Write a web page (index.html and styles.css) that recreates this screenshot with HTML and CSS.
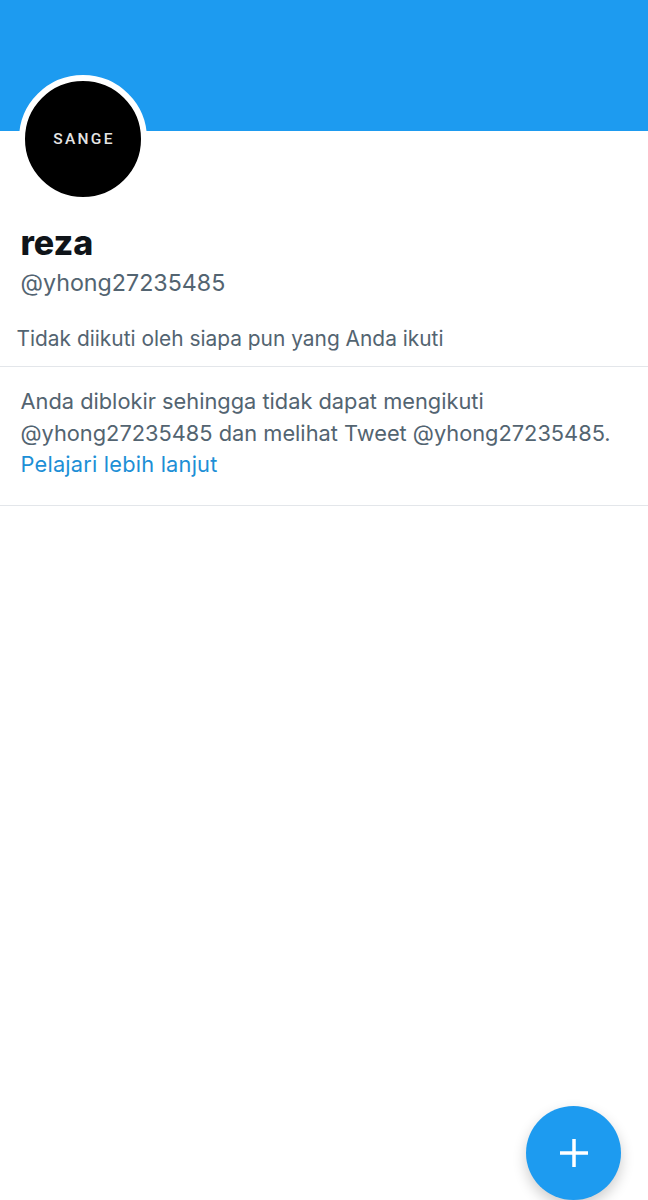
FILE: index.html
```html
<!DOCTYPE html>
<html lang="id">
<head>
    <meta charset="UTF-8">
    <meta name="viewport" content="width=device-width, initial-scale=1.0">
    <title>reza</title>
    <link rel="stylesheet" href="styles.css">
</head>
<body>
    <div class="page">
        <div class="banner"></div>
        <div class="profile">
            <div class="avatar"><span class="avatar-text">SANGE</span></div>
            <h1 class="name">reza</h1>
            <div class="handle">@yhong27235485</div>
            <div class="followers">Tidak diikuti oleh siapa pun yang Anda ikuti</div>
        </div>
        <div class="blocked">
            <p>Anda diblokir sehingga tidak dapat mengikuti<br>@yhong27235485 dan melihat Tweet @yhong27235485.<br><a href="#">Pelajari lebih lanjut</a></p>
        </div>
        <button class="fab" aria-label="Tweet">
            <svg width="28" height="28" viewBox="0 0 28 28"><path d="M14 0V28M0 14H28" stroke="#fff" stroke-width="3.500" fill="none"/></svg>
        </button>
    </div>
</body>
</html>
```

FILE: styles.css
```css
html, body {
    margin: 0;
    padding: 0;
}
body {
    font-family: Inter, "Noto Sans", Arial, sans-serif;
    background-color: #ffffff;
    color: #536471;
}
.page {
    position: relative;
    height: 1200px;
    overflow: hidden;
}
.banner {
    height: 131px;
    background-color: #1d9bf0;
}
.profile {
    padding: 0 0 13px 20.500px;
    border-bottom: 1px solid #e3e6ea;
}
.avatar {
    box-sizing: border-box;
    width: 128px;
    height: 128px;
    margin: -56px 0 0 -1.500px;
    border: 6px solid #ffffff;
    border-radius: 50%;
    background-color: #000000;
    display: flex;
    align-items: center;
    justify-content: center;
}
.avatar-text {
    font-family: Roboto, "Liberation Sans", Arial, sans-serif;
    font-size: 15.500px;
    font-weight: 500;
    letter-spacing: 2.300px;
    color: #e4e4e4;
    margin-right: -2px;
}
.name {
    margin: 20px 0 0 0;
    font-size: 34px;
    line-height: 40px;
    font-weight: 800;
    color: #0f1419;
}
.handle {
    margin-top: 5px;
    font-size: 23.250px;
    line-height: 30px;
}
.followers {
    margin: 27px 0 0 -4px;
    font-size: 20.900px;
    line-height: 28px;
}
.blocked {
    padding: 19px 20.500px 24px;
    border-bottom: 1px solid #e3e6ea;
}
.blocked p {
    margin: 0;
    font-size: 21.800px;
    line-height: 31.500px;
}
.blocked a {
    color: #1d8fd6;
    letter-spacing: 0.200px;
    text-decoration: none;
}
.fab {
    position: absolute;
    left: 526px;
    top: 1106px;
    width: 95px;
    height: 94px;
    padding: 0;
    border: none;
    border-radius: 50%;
    background-color: #1d9bf0;
    box-shadow: 0 6px 14px rgba(0, 0, 0, 0.2);
    display: flex;
    align-items: center;
    justify-content: center;
}
```
